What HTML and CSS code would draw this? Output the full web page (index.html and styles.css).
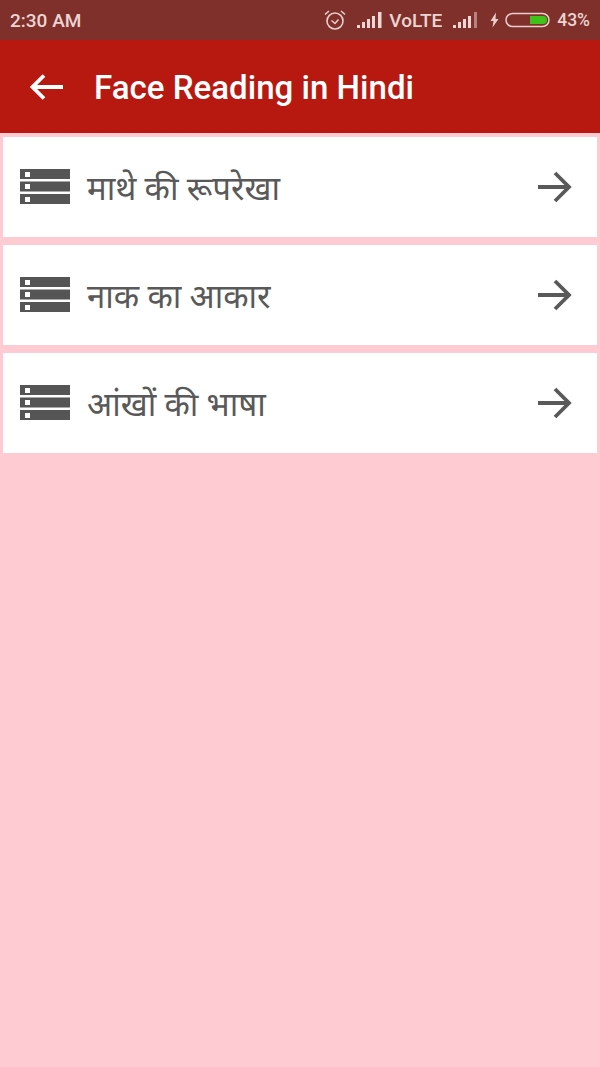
FILE: index.html
```html
<!DOCTYPE html>
<html lang="hi">
<head>
<meta charset="utf-8">
<title>Face Reading in Hindi</title>
<link rel="stylesheet" href="styles.css">
</head>
<body>
<div class="status">
  <span class="time">2:30 AM</span>
  <div class="status-right">
    <svg class="alarm" width="22" height="22" viewBox="0 0 22 22"><g fill="none" stroke="#e9cfcb" stroke-width="1.600"><circle cx="11" cy="12" r="8"/><path d="M7.500 11.500l3.500 3 3.500-4"/><path d="M1 5.500l4-3.500M21 5.500l-4-3.500"/></g></svg>
    <svg class="signal" width="25" height="18" viewBox="0 0 25 18"><g fill="#edd8d5"><rect x="0" y="14" width="3" height="3"/><rect x="5" y="11" width="3" height="6"/><rect x="10" y="8" width="3" height="9"/><rect x="15" y="5" width="3" height="12"/><rect x="21" y="1" width="3.500" height="16"/></g></svg>
    <span class="volte">VoLTE</span>
    <svg class="signal2" width="25" height="18" viewBox="0 0 25 18"><g fill="#edd8d5"><rect x="0" y="14" width="3" height="3"/><rect x="5" y="11" width="3" height="6"/><rect x="10" y="8" width="3" height="9"/><rect x="15" y="5" width="3" height="12"/></g><rect x="21" y="1" width="3" height="16" fill="#b5827d"/></svg>
    <svg class="bolt" width="9" height="16" viewBox="0 0 9 16"><path d="M6 0.500L0.500 9h3L2.500 15.500 8.500 7h-3z" fill="#e9cfcb"/></svg>
    <svg class="battery" width="45" height="16" viewBox="0 0 45 16"><rect x="1" y="1.500" width="43" height="13" rx="6.500" fill="none" stroke="#e9cfcb" stroke-width="1.500"/><path d="M25 4h13a4 4 0 0 1 0 8H25z" fill="#3fc21a"/></svg>
    <span class="pct">43%</span>
  </div>
</div>
<header class="appbar">
  <svg class="back" width="36" height="28" viewBox="0 0 36 28"><path d="M34 14H4M15 2.500L3.500 14 15 25.500" fill="none" stroke="#fff" stroke-width="3.800"/></svg>
  <h1 class="title">Face Reading in Hindi</h1>
</header>
<main class="list">
  <a class="card">
    <svg class="rows" width="50" height="36" viewBox="0 0 50 36"><use href="#rows-icon"/></svg>
    <span class="label">माथे की रूपरेखा</span>
    <svg class="go" width="36" height="36" viewBox="0 0 36 36"><use href="#go-icon"/></svg>
  </a>
  <a class="card">
    <svg class="rows" width="50" height="36" viewBox="0 0 50 36"><use href="#rows-icon"/></svg>
    <span class="label">नाक का आकार</span>
    <svg class="go" width="36" height="36" viewBox="0 0 36 36"><use href="#go-icon"/></svg>
  </a>
  <a class="card">
    <svg class="rows" width="50" height="36" viewBox="0 0 50 36"><use href="#rows-icon"/></svg>
    <span class="label">आंखों की भाषा</span>
    <svg class="go" width="36" height="36" viewBox="0 0 36 36"><use href="#go-icon"/></svg>
  </a>
</main>
<svg class="defs" width="0" height="0">
  <defs>
    <g id="rows-icon">
      <path fill="#555" fill-rule="evenodd" d="M0 0h50v10H0zM5 3v5h5V3zM0 12.500h50v10H0zM5 15v5h5v-5zM0 25h50v10H0zM5 28v5h5v-5z"/>
    </g>
    <g id="go-icon">
      <path d="M1 18h31M18 4l14 14-14 14" fill="none" stroke="#595959" stroke-width="3.800"/>
    </g>
  </defs>
</svg>
</body>
</html>
```
FILE: styles.css
```css
* { box-sizing: border-box; }
html, body { margin: 0; padding: 0; }
body {
  width: 600px;
  height: 1067px;
  background: #fecbd2;
  font-family: Roboto, "Noto Sans", "Noto Sans Devanagari", "Lohit Devanagari", sans-serif;
  overflow: hidden;
}
.status {
  height: 40px;
  background: #7f302b;
  color: #ecd5d2;
  display: flex;
  align-items: center;
  justify-content: space-between;
  padding: 0 10px;
  font-size: 19px;
  font-weight: 500;
}
.status-right { display: flex; align-items: center; }
.alarm { margin-right: 11px; }
.signal { margin-right: 7px; }
.volte { margin-right: 11px; }
.signal2 { margin-right: 12px; }
.bolt { margin-right: 6px; }
.battery { margin-right: 7px; }
.pct { font-size: 17.500px; }
.appbar {
  height: 93px;
  background: #b71810;
  display: flex;
  align-items: center;
  padding-left: 29px;
}
.back { margin-right: 29px; }
.title {
  margin: 0;
  padding-top: 2px;
  color: #fff;
  font-size: 33.100px;
  font-weight: 500;
  line-height: 1;
}
.list {
  display: flex;
  flex-direction: column;
  gap: 8px;
  padding: 4px 3px 0;
}
.card {
  height: 100px;
  background: #fff;
  display: flex;
  align-items: center;
  padding: 0 24px 0 17px;
}
.rows { margin-right: 17px; flex: none; }
.label {
  flex: 1;
  padding-top: 2px;
  color: #595959;
  font-size: 33px;
  line-height: 1;
}
.go { flex: none; }
.defs { position: absolute; }
```
